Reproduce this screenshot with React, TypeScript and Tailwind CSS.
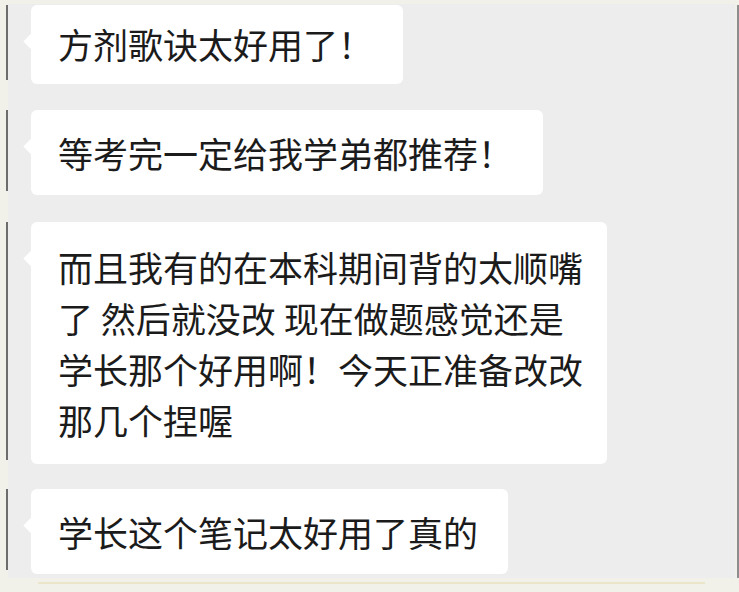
const messages = [
  { lines: ["方剂歌诀太好用了！"], pad: "pt-[13px] pb-[15px] pr-[30px]", gap: "mt-[1px]" },
  { lines: ["等考完一定给我学弟都推荐！"], pad: "py-[17px] pr-[30px]", gap: "mt-[26px]" },
  {
    lines: [
      "而且我有的在本科期间背的太顺嘴",
      "了 然后就没改 现在做题感觉还是",
      "学长那个好用啊！今天正准备改改",
      "那几个捏喔",
    ],
    pad: "py-[19px] pr-[24px]",
    gap: "mt-[27px]",
  },
  { lines: ["学长这个笔记太好用了真的"], pad: "py-[17px] pr-[30px]", gap: "mt-[25px]" },
]

function Bubble({ lines, pad, gap }: { lines: string[]; pad: string; gap: string }) {
  return (
    <div className={`relative flex ${gap}`}>
      {/* stray edge line from the crop */}
      <div className="absolute left-[-2px] top-0 bottom-[4px] w-[2px] bg-[#6d6d6d]" />
      <div className={`relative ml-[23px] rounded-[6px] bg-white pl-[27px] ${pad}`}>
        <div className="absolute left-[-5px] top-[30px] h-[13px] w-[13px] rotate-45 bg-white" />
        <div className="relative">
          {lines.map((l, i) => (
            <div key={i} className="whitespace-pre text-[35px] leading-[51px] text-[#1b1b1b]">
              {l}
            </div>
          ))}
        </div>
      </div>
    </div>
  )
}

export default function App() {
  return (
    <div
      className="flex h-[592px] w-[739px] flex-col bg-[#f2f1e9] pt-[4px]"
      style={{ fontFamily: '"Noto Sans CJK SC", "Noto Sans", sans-serif' }}
    >
      <div className="flex h-[574px]">
        <div className="w-[8px]" />
        <div className="flex flex-1 flex-col bg-[#ededed]">
          {messages.map((m, i) => (
            <Bubble key={i} {...m} />
          ))}
        </div>
        <div className="w-[2px]" />
        <div className="mt-[1px] w-[2px] bg-[#8e8e8e]" />
      </div>
      <div className="ml-[38px] mt-[4px] h-[2px] w-[667px] bg-[#ebe6c9]" />
    </div>
  )
}
